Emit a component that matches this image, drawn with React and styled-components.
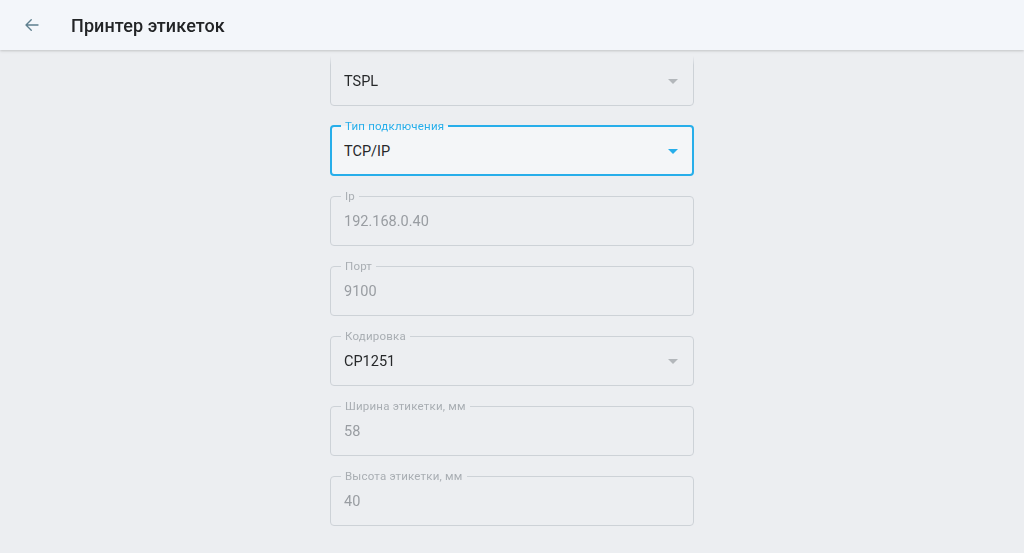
import React from "react";
import styled, { createGlobalStyle } from "styled-components";

const Global = createGlobalStyle`
  html, body { margin: 0; padding: 0; }
  body {
    background: #eceef1;
    font-family: Roboto, "Noto Sans", "Liberation Sans", sans-serif;
    overflow: hidden;
  }
  * { box-sizing: border-box; }
`;

const Page = styled.div`
  width: 1024px;
  height: 553px;
  display: flex;
  flex-direction: column;
  background: #eceef1;
  position: relative;
`;

const Header = styled.header`
  height: 50px;
  flex: none;
  display: flex;
  align-items: center;
  background: #f3f6fa;
  box-shadow: 0 1px 2px rgba(0, 0, 0, 0.12), 0 2px 3px rgba(0, 0, 0, 0.05);
  z-index: 2;
`;

const BackButton = styled.button`
  width: 64px;
  height: 50px;
  border: 0;
  background: transparent;
  display: flex;
  align-items: center;
  justify-content: center;
  padding: 0;
  margin-right: 7px;
  color: #5e7f8e;
`;

const Title = styled.h1`
  margin: 0;
  font-size: 18px;
  font-weight: 500;
  color: #222426;
  letter-spacing: 0.1px;
`;

const Scroll = styled.main`
  flex: 1;
  overflow: hidden;
  -webkit-mask-image: linear-gradient(to bottom, transparent 0, transparent 6px, #000 15px);
  mask-image: linear-gradient(to bottom, transparent 0, transparent 6px, #000 15px);
`;

const Form = styled.div`
  width: 364px;
  margin: 6px auto 0;
  display: flex;
  flex-direction: column;
  gap: 20px;
`;

const Field = styled.div`
  position: relative;
  height: 50px;
  border-radius: 4px;
  background: ${(p) => (p.$focused ? "#f4f6f8" : "transparent")};
  display: flex;
  align-items: center;
  padding: 0 14px;
`;

const Outline = styled.fieldset`
  position: absolute;
  inset: -6px 0 0 0;
  margin: 0;
  padding: 0 ${(p) => (p.$focused ? "9px" : "10px")};
  border-radius: 4px;
  border: ${(p) => (p.$focused ? "2px solid #27aeea" : "1px solid #cdd2d7")};
  pointer-events: none;
`;

const Legend = styled.legend`
  padding: 0 4px;
  font-size: 11.5px;
  line-height: 12px;
  color: ${(p) => (p.$focused ? "#27aeea" : "#a9aeb3")};
  letter-spacing: 0.2px;
`;

const Value = styled.span`
  flex: 1;
  font-size: 14.5px;
  color: ${(p) => (p.$muted ? "#999da2" : "#26282a")};
  padding-top: 1px;
`;

const Caret = styled.span`
  width: 0;
  height: 0;
  border-left: 5px solid transparent;
  border-right: 5px solid transparent;
  border-top: 5px solid ${(p) => (p.$focused ? "#27aeea" : "#b3b7bb")};
  margin-right: 2px;
`;

const fields = [
  { label: "", value: "TSPL", select: true },
  { label: "Тип подключения", value: "TCP/IP", select: true, focused: true },
  { label: "Ip", value: "192.168.0.40", muted: true },
  { label: "Порт", value: "9100", muted: true },
  { label: "Кодировка", value: "CP1251", select: true },
  { label: "Ширина этикетки, мм", value: "58", muted: true },
  { label: "Высота этикетки, мм", value: "40", muted: true },
];

export default function App() {
  return (
    <>
      <Global />
      <Page>
        <Header>
          <BackButton aria-label="Назад">
            <svg width="18" height="18" viewBox="0 0 24 24" fill="none">
              <path
                d="M20 12H4.5M11 5l-7 7 7 7"
                stroke="currentColor"
                strokeWidth="1.8"
                strokeLinecap="round"
                strokeLinejoin="round"
              />
            </svg>
          </BackButton>
          <Title>Принтер этикеток</Title>
        </Header>
        <Scroll>
          <Form>
            {fields.map((f, i) => (
              <Field key={i} $focused={f.focused}>
                <Outline $focused={f.focused}>
                  {f.label ? <Legend $focused={f.focused}>{f.label}</Legend> : null}
                </Outline>
                <Value $muted={f.muted}>{f.value}</Value>
                {f.select ? <Caret $focused={f.focused} /> : null}
              </Field>
            ))}
          </Form>
        </Scroll>
      </Page>
    </>
  );
}
